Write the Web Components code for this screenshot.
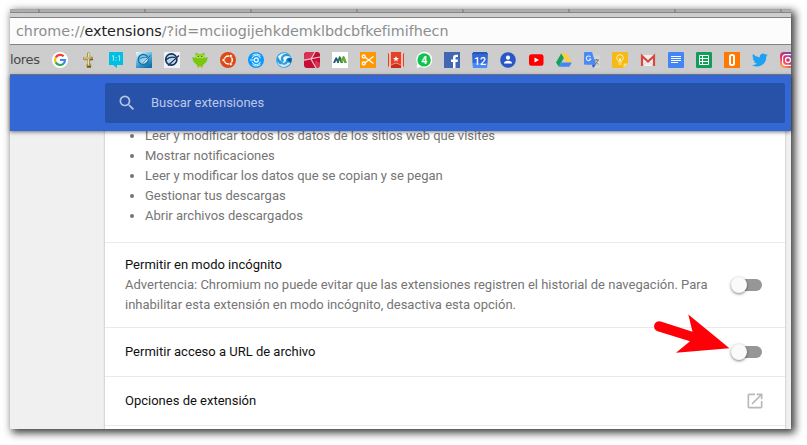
<!DOCTYPE html>
<html lang="es">
<head>
<meta charset="utf-8">
<title>Extensiones</title>
<style>
html,body{margin:0;height:445px;overflow:hidden;background:#fff}
body{font-family:Roboto,"Noto Sans",sans-serif}
</style>
</head>
<body>
<browser-window>
  <address-bar slot="chrome"></address-bar>
  <bookmark-bar slot="chrome"></bookmark-bar>
  <search-header slot="chrome">Buscar extensiones</search-header>
  <details-card>
    <permission-list>
      <li>Leer y modificar todos los datos de los sitios web que visites</li>
      <li>Mostrar notificaciones</li>
      <li>Leer y modificar los datos que se copian y se pegan</li>
      <li>Gestionar tus descargas</li>
      <li>Abrir archivos descargados</li>
    </permission-list>
    <setting-row>Permitir en modo incógnito
      <span slot="note">Advertencia: Chromium no puede evitar que las extensiones registren el historial de navegación. Para<br>inhabilitar esta extensión en modo incógnito, desactiva esta opción.</span>
      <toggle-switch slot="control"></toggle-switch>
    </setting-row>
    <setting-row>Permitir acceso a URL de archivo<toggle-switch slot="control"></toggle-switch></setting-row>
    <setting-row>Opciones de extensión<open-icon slot="control"></open-icon></setting-row>
    <setting-row></setting-row>
  </details-card>
</browser-window>
<pointer-arrow></pointer-arrow>
<script>
const element = (name, html) => customElements.define(name, class extends HTMLElement {
  constructor() {
    super();
    this.attachShadow({mode: 'open'}).innerHTML = html;
  }
});

element('browser-window', `<style>
:host{display:block;padding:9px 16px 16px 10px}
.frame{width:781px;height:420px;box-sizing:border-box;display:flex;flex-direction:column;background:#f0f0f0;box-shadow:3px 3px 8px 1px rgba(0,0,0,.76)}
.tabs{height:8px;flex:none;box-sizing:border-box;background:linear-gradient(#a5a5a5 0,#b3b3b3 3px,#858585 3px,#858585 4px,#cecece 4px);display:flex;padding-left:28px;gap:104px}
.tabs i{width:2px;height:3px;background:#7e7e7e;flex:none;clip-path:polygon(0 0,50% 0,100% 100%,30% 100%)}
.page{flex:1;overflow:hidden;padding-left:95px}
</style><div class="frame"><div class="tabs"><i></i><i></i><i></i><i></i><i></i><i></i><i></i><i></i></div><slot name="chrome"></slot><div class="page"><slot></slot></div></div>`);

element('address-bar', `<style>
:host{display:flex;flex:none;height:28px;box-sizing:border-box;align-items:center;background:#fcfcfc;border:solid #828282;border-width:1px 0;padding:0 0 1px 6px;font:14.32px/20px "DejaVu Sans",sans-serif;color:#8d8d8d;white-space:nowrap}
b{font-weight:400;color:#222}
</style><span>chrome://<b>extensions</b>/?id=mciiogijehkdemklbdcbfkefimifhecn</span>`);

const svg = body => `<svg viewBox="0 0 16 16">${body}</svg>`;
const marks = [
  `<circle cx="8" cy="8" r="8" fill="#fff"/><g fill="none" stroke-width="2.2"><path d="M11.7 4.3A5 5 0 0 0 3.7 5.6" stroke="#ea4335"/><path d="M3.7 5.5a5 5 0 0 0 0 5" stroke="#fbbc05"/><path d="M3.7 10.4a5 5 0 0 0 7.7 1.3" stroke="#34a853"/><path d="M8 8h5a5 5 0 0 1-1.8 3.9" stroke="#4285f4"/></g>`,
  `<path d="M7 1.5Q7 .3 8.5.3T10.2 1.5V4.8H13V7.6h-2.8L10 11l1.5 2-.5 2.5H6.8L6.3 13 7.6 11 7.3 8.2H4.2L3 7.2V5.2l4-.4z" fill="#a79245"/><path d="M8 1h1.5v4H8zM4 5.4h6.5v1H4zM8 7.3h1v6H8z" fill="#e9dfa8"/><path d="M10 7.2h3v1h-3zM7 14.2h4v1.3H7z" fill="#53451c"/>`,
  `<path d="M1 0h14v13H9v3l-4-3H1z" fill="#00bfe0"/><path d="M4 4.3l1.4-.8V9M10.2 4.3l1.4-.8V9M8 5v1M8 7.7v1" fill="none" stroke="#9aecf7"/>`,
  `<defs><linearGradient id="g" x2=".6" y2="1"><stop stop-color="#f3fbfd"/><stop offset=".5" stop-color="#62b9df"/><stop offset="1" stop-color="#1274af"/></linearGradient></defs><path d="M0 0h16v16H0z" fill="url(#g)"/><circle cx="7.3" cy="7.5" r="5" fill="#8fd0e8" stroke="#1b6fa8" stroke-width="1.4"/><path d="M2.5 8c3-3 6-3.3 9.5-2" fill="none" stroke="#1b6fa8"/><path d="M4.5 13l2.5-4L13 4.5 11 9z" fill="#dff5fb"/><path d="M4 13.5L14.5 3.5" stroke="#1b6fa8"/>`,
  `<path d="M0 0h16v16H0z" fill="#f0f1f4"/><circle cx="7.3" cy="7.5" r="5.6" fill="#b8d8e8" stroke="#14305f" stroke-width="1.6"/><path d="M1.8 8c3-3 7-3.3 10.5-2" fill="none" stroke="#14305f" stroke-width="1.3"/><path d="M4.5 13l2.5-4L13 4.5 11 9z" fill="#fff"/><path d="M4 13.5L15 3.5" stroke="#14305f" stroke-width="1.3"/>`,
  `<path d="M3.5.5L6.5 2h3l3-1.5-.3 5L16 5.5l-1.8 4.8-3 2.5-1.2 2.4-2-1.2-2 1.2-1.2-2.4-3-2.5L0 5.5l3.8 0z" fill="#79c810"/><ellipse cx="6" cy="4.4" rx="1.8" ry="1.9" fill="#b9ee58"/><ellipse cx="10" cy="4.4" rx="1.8" ry="1.9" fill="#b9ee58"/><circle cx="6.2" cy="4.2" r=".8" fill="#32530a"/><circle cx="9.8" cy="4.2" r=".8" fill="#32530a"/><path d="M7 5.5h2L8 7.5z" fill="#f6a500"/><path d="M5.5 15h1.8M8.7 15h1.8" stroke="#d79a12"/>`,
  `<circle cx="8" cy="8" r="8" fill="#dd4814"/><circle cx="8.3" cy="8" r="4" fill="none" stroke="#fff" stroke-width="1.5"/><g fill="#fff" stroke="#dd4814" stroke-width=".6"><circle cx="3.5" cy="8" r="1.5"/><circle cx="10.8" cy="3.9" r="1.5"/><circle cx="10.8" cy="12.1" r="1.5"/></g>`,
  `<circle cx="8" cy="8" r="8" fill="#0b9afb"/><g fill="none" stroke="#eaf8ff"><circle cx="8.3" cy="8" r="2" stroke-width="1.3"/><path d="M4 6.3a4.5 4.5 0 0 1 8.5 0M12.5 9.7a4.5 4.5 0 0 1-8.5 0M2 8h4M4.5 3.3a6 6 0 0 1 8 .5M12.5 12.2a6 6 0 0 1-8 .5" stroke-width="1"/></g>`,
  `<circle cx="8" cy="8" r="7.8" fill="#2d9bdb"/><path d="M2 4.2Q6 0 11.5 1.2 6 2 5 5.5T7.5 10Q3 9 2 4.2z" fill="#e4f7fc"/><path d="M7 6q2-3.5 8.5-.5Q11 5 10.3 8T5.5 11.5Q9 9.500 7 6z" fill="#e4f7fc"/><path d="M1 9.5q3 4.500 9.500 1.500Q12.500 10 14.500 11 11 15.500 6.500 15 2 13.500 1 9.500z" fill="#c3e9f8"/><path d="M10.500 8q.8-2.500 5-2 .7 3-1 5Q13 9 10.500 8zM6.500 12q3 0 5-1.500-1.500 3-5 1.500z" fill="#0762ad"/>`,
  `<rect width="16" height="16" rx="3" fill="#c60d36"/><path d="M3 0h7L7 7 0 9V3zM11 8l5 3v2a3 3 0 0 1-3 3h-2z" fill="#ed6275" opacity=".45"/><path d="M0 8.2L16 5M11 0L7 7l5 9" fill="none" stroke="#efc7cf" stroke-width="1.2"/>`,
  `<path d="M0 0h16v16H0z" fill="#fff"/><path d="M1 11l2.500-5.500q1-1 2 1L7 11H5.500L4.300 8.500 3 11z" fill="#23568f"/><path d="M4.800 11l2.200-6.500q1-1 2 1L11 11H8.700L7.500 8 6.800 11z" fill="#28774e"/><path d="M8.800 9l2-4.700q1-1 2 1L15 11h-3l-1-3-1 3z" fill="#66a92f"/>`,
  `<path d="M0 0h16v16H0z" fill="#ff9800"/><g fill="none" stroke="#fff" stroke-width="1.3"><circle cx="3.700" cy="4.500" r="1.500"/><circle cx="3.700" cy="11.500" r="1.500"/><path d="M5 5.200l8.500 6.300M5 10.800l8.500-6.300"/></g>`,
  `<rect width="16" height="16" rx="3" fill="#e34128"/><path d="M2 0v16M14 0v16" stroke="#fff" stroke-width="1.3"/><path d="M3 12h10v4H3z" fill="#c82f1a"/><path d="M3 13l5-2 5 2" fill="none" stroke="#f9cdc5" stroke-width=".6"/><path d="M8 4l.8 2H11L9.300 7.400l.6 2.100L8 8.300 6.100 9.500l.6-2.100L5 6h2.200z" fill="#fff"/>`,
  `<path d="M.5 15.700L1.500 12A8 8 0 1 1 5 15z" fill="#fff"/><circle cx="8.100" cy="7.900" r="6.700" fill="#12c24e"/><text x="8.200" y="11.700" text-anchor="middle" font-size="10.500" font-weight="700" fill="#fff">4</text>`,
  `<path d="M0 0h16v16H0z" fill="#4267b2"/><path d="M9 16V10H7V7.500h2V6Q9 2.700 12 2.700h2V5h-1.300Q11.500 5 11.500 6.200V7.500H14L13.600 10h-2.100v6z" fill="#fff"/>`,
  `<path d="M0 1h16l-.5 10H.5z" fill="#3367d6"/><path d="M.3 11h15.400L15 16H1z" fill="#4c8bf5"/><path d="M1 0h14v2H1z" fill="#2857b8"/><text x="8" y="12.600" text-anchor="middle" font-size="10.500" font-weight="500" fill="#fff">12</text>`,
  `<circle cx="8" cy="8" r="7.800" fill="#2a56c6"/><circle cx="8" cy="5.700" r="2.100" fill="#fff"/><path d="M4 11.500q0-2.700 4-2.700t4 2.700z" fill="#fff"/>`,
  `<rect x="1" y="2.300" width="14.500" height="11.400" rx="2.500" fill="#f00"/><path d="M6.500 5.500v5L11 8z" fill="#fff"/>`,
  `<path d="M5.300 1.200L0 10.500l2.800 4.300L8 5.800z" fill="#12a15c"/><path d="M5.300 1.200h5.400l5.100 9.300h-5.400z" fill="#ffcd40"/><path d="M2.800 14.800l2.600-4.400h10.500l-2.700 4.400z" fill="#4285f4"/>`,
  `<path d="M6 3.500h9q1 0 1 1V15q0 1-1 1H10z" fill="#d5d5d6"/><path d="M1 0h7l4 12.700H1q-1 0-1-1V1q0-1 1-1z" fill="#4a8af4"/><path d="M8 12.700h4L9 16z" fill="#2d5ac7"/><path d="M6.500 5A2.300 2.300 0 1 0 6.800 7H5" fill="none" stroke="#dceaff" stroke-width="1.100"/><path d="M10 8h5M12.500 7v1M14 8q-1 3-3.500 4.500M11.300 9.500l3 3" fill="none" stroke="#6b7a82"/>`,
  `<path d="M1 0h14q1 0 1 1v10.500L11.500 16H1q-1 0-1-1V1q0-1 1-1z" fill="#f5ba15"/><path d="M11.500 11.500H16L11.500 16z" fill="#ffdf76"/><path d="M6.400 10V8.800Q4.700 7.700 4.700 6a3.300 3.300 0 0 1 6.600 0q0 1.700-1.700 2.800V10zM6.400 12h3.200M7.500 9V6.700L6.700 6M8.500 9V6.700l.8-.7" fill="none" stroke="#fff1ba" stroke-width="1"/>`,
  `<path d="M1 3h14v11H1z" fill="#eee"/><path d="M3 13l5-4 5 4" fill="none" stroke="#d4d4d4"/><path d="M2 14V4l6 5.500L14 4v10" fill="none" stroke="#d7493d" stroke-width="2.200"/>`,
  `<rect width="16" height="16" rx="1.200" fill="#4285f4"/><path d="M3 4.500h10M3 6.500h10M3 8.500h10M3 10.500h7" stroke="#fff"/>`,
  `<rect width="16" height="16" rx="1.200" fill="#0f9d58"/><path d="M3.500 3.500h9v9h-9zM3.500 6.500h9M3.500 9.500h9M6.500 3.500v9" fill="none" stroke="#fff"/>`,
  `<path d="M0 0h16v16H0z" fill="#ff7900"/><rect x="6" y="3.100" width="4" height="9.800" rx="1.500" fill="none" stroke="#fff" stroke-width="2"/>`,
  `<path d="M15.800 3.100l-1.800.5 1.300-1.800-2 .8A3.300 3.300 0 0 0 7.700 5.500 9.200 9.200 0 0 1 1.100 2a3.300 3.300 0 0 0 1 4.400L.7 6a3.300 3.300 0 0 0 2.600 3.300H1.800A3.300 3.300 0 0 0 4.900 11.500 6.700 6.700 0 0 1 0 13a9.300 9.300 0 0 0 14.200-8.300z" fill="#1da1f2"/>`,
  `<defs><linearGradient id="i" x1="0" y1="1" x2=".8" y2="0"><stop stop-color="#ffd45c"/><stop offset=".45" stop-color="#ee2a62"/><stop offset="1" stop-color="#6548cb"/></linearGradient></defs><rect width="16" height="16" rx="4" fill="url(#i)"/><rect x="2.600" y="2.600" width="10.800" height="10.800" rx="3" fill="none" stroke="#fff" stroke-width="1.200"/><circle cx="8" cy="8" r="2.500" fill="none" stroke="#fff" stroke-width="1.300"/>`
];
element('bookmark-bar', `<style>
:host{display:flex;flex:none;height:30px;box-sizing:border-box;align-items:center;gap:12px;background:#cdcdcd;border-bottom:1px solid #828282;overflow:hidden;font:13px/20px "DejaVu Sans",sans-serif;color:#484848}
.label{width:30px;flex:none;white-space:nowrap;letter-spacing:-.35px}
svg{width:16px;height:16px;flex:none;display:block;font-family:Roboto,sans-serif}
</style><span class="label">lores</span>${marks.map(svg).join('')}`);

element('search-header', `<style>
:host{display:block;flex:none;height:56px;box-sizing:border-box;padding:8px 6px 8px 95px;background:#3367d6;box-shadow:0 1px 4px rgba(0,0,0,.55);position:relative;z-index:1}
.field{height:40px;box-sizing:border-box;border-radius:2px;background:#2851a8;display:flex;align-items:center;gap:14px;padding-left:12px;color:#b9c8e8;font-size:13px;line-height:20px}
svg{width:20px;height:20px}
</style><div class="field"><svg viewBox="0 0 24 24"><path fill="#b6c5e6" d="M15.5 14h-.79l-.28-.27A6.47 6.47 0 0 0 16 9.5 6.5 6.5 0 1 0 9.5 16c1.61 0 3.09-.59 4.23-1.57l.27.28v.79l5 4.99L20.49 19l-4.99-5zm-6 0C7.01 14 5 11.99 5 9.5S7.01 5 9.5 5 14 7.01 14 9.5 11.99 14 9.5 14z"/></svg><slot></slot></div>`);

element('details-card', `<style>
:host{display:block;width:680px;height:320px;margin-top:-5px;background:#fff;box-shadow:0 0 2px rgba(0,0,0,.3)}
</style><slot></slot>`);

element('permission-list', `<style>
:host{display:block;padding-bottom:16px;color:#757575;font-size:13px;line-height:20px}
ul{margin:0;padding:0 0 0 40px}
</style><ul><slot></slot></ul>`);

element('setting-row', `<style>
:host{display:flex;align-items:center;justify-content:space-between;min-height:49px;box-sizing:border-box;border-top:1px solid #e9e9e9;padding:12px 20px;font-size:13px;line-height:20px;color:#111}
.note{color:#757575;white-space:nowrap}
</style><div><slot></slot><div class="note"><slot name="note"></slot></div></div><slot name="control"></slot>`);

element('toggle-switch', `<style>
:host{display:flex;align-items:center;width:34px;height:16px;padding-right:1px}
.track{width:28px;height:12px;margin-left:4px;border-radius:6px;background:#969696;display:flex;align-items:center}
.knob{width:16px;height:16px;margin-left:-3px;border-radius:50%;background:#fafafa;box-shadow:0 1px 3px rgba(0,0,0,.5);flex:none}
</style><div class="track"><div class="knob"></div></div>`);

element('open-icon', `<style>:host,svg{display:block;width:20px;height:20px}</style><svg viewBox="0 0 24 24"><path fill="#b9b9b9" d="M19 19H5V5h7V3H5a2 2 0 0 0-2 2v14a2 2 0 0 0 2 2h14c1.1 0 2-.9 2-2v-7h-2v7zM14 3v2h3.59l-9.83 9.83 1.41 1.41L19 6.41V10h2V3h-7z"/></svg>`);

element('pointer-arrow', `<style>:host{position:absolute;left:650px;top:310px;z-index:2}svg{display:block}</style>
<svg width="84" height="46"><path fill="#ff0008" d="M10.8 11.4L42.500 21.700 38.300 4.600 79.500 38.200 26 42.800 40 31.200 7.600 21.200A5.100 5.100 0 0 1 10.800 11.400z"/></svg>`);
</script>
</body>
</html>
